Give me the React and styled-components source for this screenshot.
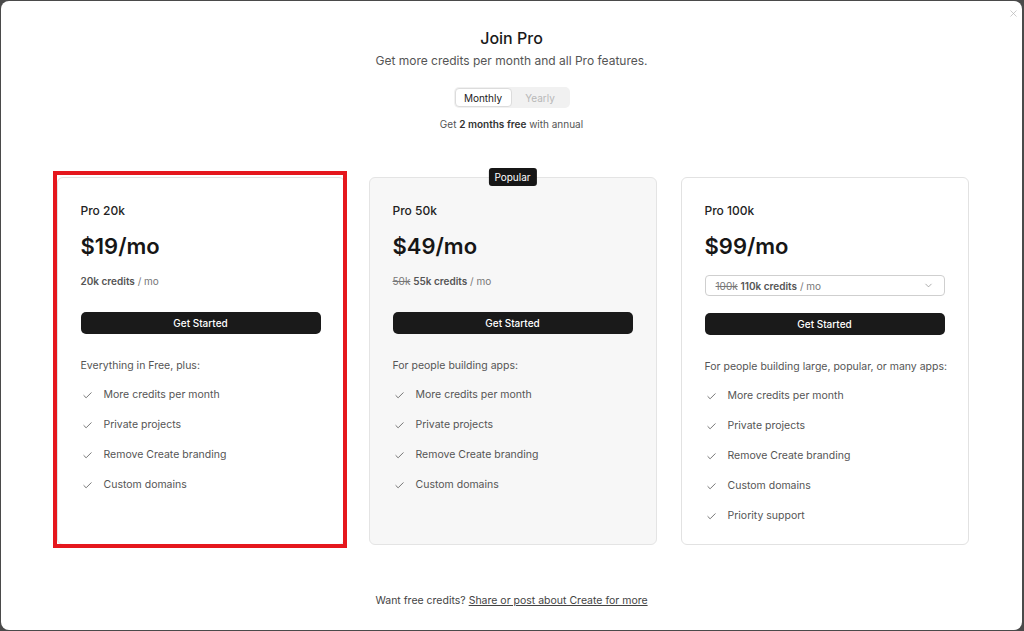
import React from "react";
import styled, { createGlobalStyle } from "styled-components";
import { Check, ChevronDown, X } from "lucide-react";

const plans = [
  {
    name: "Pro 20k",
    price: "$19/mo",
    credits: "20k credits",
    description: "Everything in Free, plus:",
    features: ["More credits per month", "Private projects", "Remove Create branding", "Custom domains"],
    highlighted: true,
  },
  {
    name: "Pro 50k",
    price: "$49/mo",
    oldCredits: "50k",
    credits: "55k credits",
    description: "For people building apps:",
    features: ["More credits per month", "Private projects", "Remove Create branding", "Custom domains"],
    popular: true,
  },
  {
    name: "Pro 100k",
    price: "$99/mo",
    oldCredits: "100k",
    credits: "110k credits",
    description: "For people building large, popular, or many apps:",
    features: [
      "More credits per month",
      "Private projects",
      "Remove Create branding",
      "Custom domains",
      "Priority support",
    ],
    select: true,
  },
];

const App = () => {
  return (
    <>
      <GlobalStyle />
      <Modal>
        <CloseButton>
          <X size={11} strokeWidth={1.5} />
        </CloseButton>
        <Title>Join Pro</Title>
        <Subtitle>Get more credits per month and all Pro features.</Subtitle>
        <Toggle>
          <ToggleOption $active>Monthly</ToggleOption>
          <ToggleOption>Yearly</ToggleOption>
        </Toggle>
        <Promo>
          Get <b>2 months free</b> with annual
        </Promo>

        <Plans>
          {plans.map((plan) => (
            <Card key={plan.name} $popular={plan.popular}>
              {plan.highlighted && <Highlight />}
              {plan.popular && <Badge>Popular</Badge>}
              <PlanName>{plan.name}</PlanName>
              <Price>{plan.price}</Price>
              {plan.select ? (
                <CreditSelect>
                  <span>
                    <s>{plan.oldCredits}</s> <b>{plan.credits}</b> / mo
                  </span>
                  <ChevronDown size={11} strokeWidth={1.5} color="#888" />
                </CreditSelect>
              ) : (
                <Credits>
                  {plan.oldCredits && <s>{plan.oldCredits}</s>} <b>{plan.credits}</b> / mo
                </Credits>
              )}
              <StartButton $tight={plan.select}>Get Started</StartButton>
              <Description>{plan.description}</Description>
              <Features>
                {plan.features.map((f) => (
                  <Feature key={f}>
                    <IconBox>
                      <Check size={11} strokeWidth={1.6} />
                    </IconBox>
                    {f}
                  </Feature>
                ))}
              </Features>
            </Card>
          ))}
        </Plans>

        <Footer>
          Want free credits? <a href="#">Share or post about Create for more</a>
        </Footer>
      </Modal>
    </>
  );
};

export default App;

const GlobalStyle = createGlobalStyle`
  html, body {
    margin: 0;
    padding: 0;
    background: #4a4a4a;
  }
  body {
    font-family: Inter, "Noto Sans", sans-serif;
    color: #111;
  }
  * { box-sizing: border-box; }
`;

const Modal = styled.div`
  position: relative;
  margin: 1px;
  height: 629px;
  width: 1021px;
  background: #fff;
  border-radius: 8px;
  display: flex;
  flex-direction: column;
  align-items: center;
  padding-top: 25px;
`;

const CloseButton = styled.div`
  position: absolute;
  top: 7px;
  right: 3px;
  color: #b5b5b5;
  display: flex;
`;

const Title = styled.h1`
  margin: 0;
  font-size: 16px;
  line-height: 24px;
  font-weight: 500;
  color: #1a1a1a;
`;

const Subtitle = styled.p`
  margin: 2px 0 0;
  font-size: 12px;
  line-height: 18px;
  color: #555;
`;

const Toggle = styled.div`
  margin-top: 17px;
  display: flex;
  padding: 1px;
  height: 21px;
  width: 116px;
  background: #f1f1f1;
  border-radius: 5px;
`;

const ToggleOption = styled.div`
  flex: 1;
  display: flex;
  align-items: center;
  justify-content: center;
  font-size: 10px;
  border-radius: 4px;
  color: ${(p) => (p.$active ? "#222" : "#b8b8b8")};
  background: ${(p) => (p.$active ? "#fff" : "transparent")};
  border: 1px solid ${(p) => (p.$active ? "#dcdcdc" : "transparent")};
`;

const Promo = styled.p`
  margin: 8px 0 0;
  font-size: 10px;
  line-height: 16px;
  color: #555;
  b {
    font-weight: 600;
    color: #333;
  }
`;

const Plans = styled.div`
  margin-top: 45px;
  margin-left: 2px;
  display: flex;
  gap: 24px;
  justify-content: center;
  align-items: stretch;
`;

const Card = styled.div`
  position: relative;
  width: 288px;
  height: 368px;
  padding: 24px 23px 0 23px;
  border-radius: 6px;
  border: 1px solid ${(p) => (p.$popular ? "#e4e4e4" : "#e2e2e2")};
  background: ${(p) => (p.$popular ? "#f7f7f7" : "#fff")};
  display: flex;
  flex-direction: column;
`;

const Highlight = styled.div`
  position: absolute;
  left: -5px;
  top: -7px;
  right: -3px;
  bottom: -4px;
  border: 4px solid #e5171d;
  pointer-events: none;
`;

const Badge = styled.div`
  position: absolute;
  top: -10px;
  left: 50%;
  transform: translateX(-50%);
  background: #161616;
  color: #fff;
  font-size: 10px;
  line-height: 18px;
  padding: 0 6px;
  border-radius: 3px;
`;

const PlanName = styled.div`
  font-size: 12px;
  line-height: 18px;
  font-weight: 500;
  color: #222;
`;

const Price = styled.div`
  margin-top: 12px;
  font-size: 22px;
  line-height: 28px;
  font-weight: 600;
  color: #161616;
`;

const Credits = styled.div`
  margin-top: 13px;
  font-size: 10px;
  line-height: 16px;
  color: #777;
  b {
    font-weight: 600;
    color: #555;
  }
  s {
    color: #777;
  }
`;

const CreditSelect = styled.div`
  margin-top: 15px;
  height: 21px;
  border: 1px solid #cfcfcf;
  border-radius: 4px;
  background: #fff;
  display: flex;
  align-items: center;
  justify-content: space-between;
  padding: 0 10px 0 10px;
  font-size: 10px;
  color: #777;
  b {
    font-weight: 600;
    color: #555;
  }
  s {
    color: #777;
  }
`;

const StartButton = styled.button`
  margin-top: ${(p) => (p.$tight ? "17px" : "23px")};
  height: 22px;
  width: 100%;
  border: none;
  border-radius: 5px;
  background: #1a1a1a;
  color: #fff;
  font-family: inherit;
  font-size: 10px;
  font-weight: 500;
`;

const Description = styled.div`
  margin-top: 24px;
  font-size: 10.5px;
  line-height: 16px;
  color: #555;
  white-space: nowrap;
`;

const Features = styled.ul`
  list-style: none;
  margin: 13px 0 0;
  padding: 0;
  display: flex;
  flex-direction: column;
  gap: 14px;
`;

const Feature = styled.li`
  display: flex;
  align-items: center;
  gap: 9px;
  font-size: 10.5px;
  line-height: 16px;
  color: #555;
`;

const IconBox = styled.span`
  width: 14px;
  display: flex;
  justify-content: center;
  color: #444;
`;

const Footer = styled.p`
  margin: 48px 0 0;
  font-size: 10.5px;
  line-height: 16px;
  color: #444;
  a {
    color: #444;
    text-decoration: underline;
  }
`;
